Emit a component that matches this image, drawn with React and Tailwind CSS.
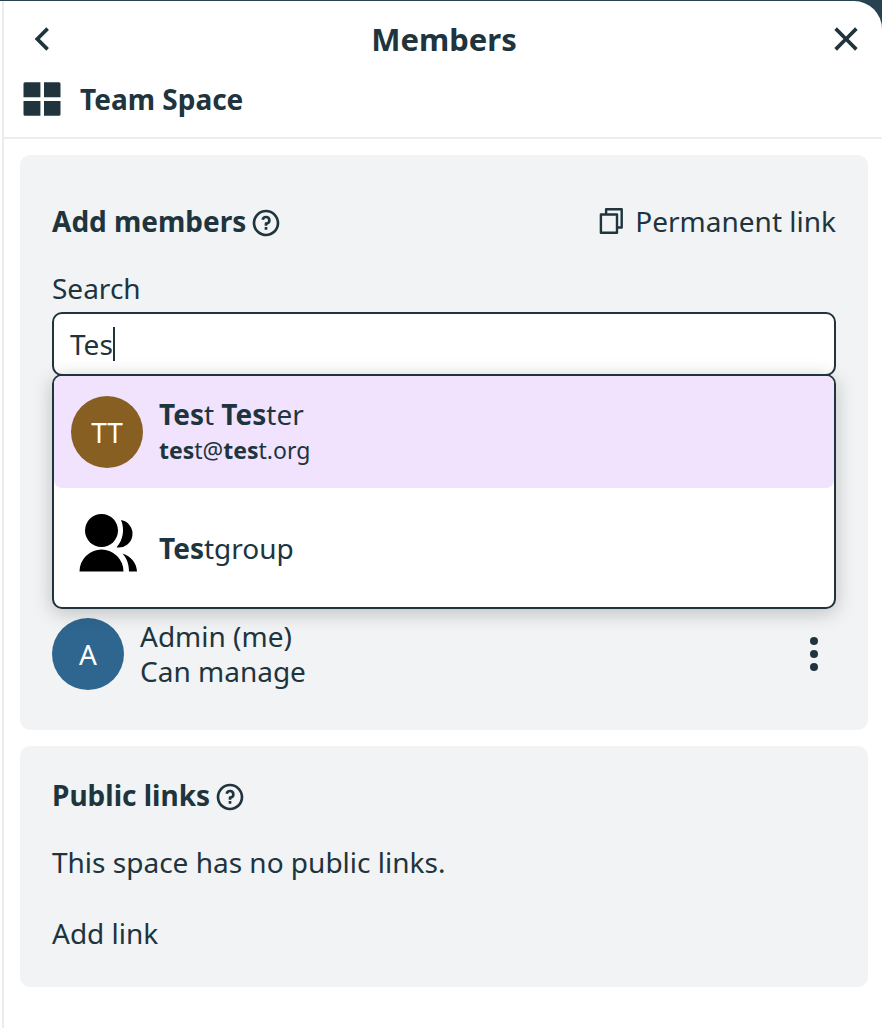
import { useState } from "react";

function HelpIcon() {
  return (
    <svg viewBox="0 0 24 24" className="size-8" fill="currentColor" aria-hidden="true">
      <path d="M12 22C6.477 22 2 17.523 2 12S6.477 2 12 2s10 4.477 10 10-4.477 10-10 10zm0-2a8 8 0 1 0 0-16 8 8 0 0 0 0 16zm-1-5h2v2h-2v-2zm2-1.645V14h-2v-1.500a1 1 0 0 1 1-1 1.500 1.500 0 1 0-1.471-1.794l-1.962-.393A3.501 3.501 0 1 1 13 13.355z" />
    </svg>
  );
}

function BackIcon() {
  return (
    <svg viewBox="0 0 24 24" className="size-11" fill="currentColor" aria-hidden="true">
      <path d="M10.828 12l4.950 4.950-1.414 1.414L8 12l6.364-6.364 1.414 1.414z" />
    </svg>
  );
}

function CloseIcon() {
  return (
    <svg viewBox="0 0 24 24" className="size-11" fill="currentColor" aria-hidden="true">
      <path d="M12 10.586l4.950-4.950 1.414 1.414-4.950 4.950 4.950 4.950-1.414 1.414-4.950-4.950-4.950 4.950-1.414-1.414 4.950-4.950-4.950-4.950L7.050 5.636z" />
    </svg>
  );
}

function SpaceIcon() {
  return (
    <svg viewBox="0 0 44 44" className="size-11" fill="currentColor" aria-hidden="true">
      <path d="M5 5.300h15.400v14.900H3.500V6.800a1.500 1.500 0 0 1 1.500-1.500zM24 5.300h15a1.500 1.500 0 0 1 1.500 1.500v13.400H24zM3.500 23.900h16.900v14.900H5a1.500 1.500 0 0 1-1.500-1.500zM24 23.900h16.500v13.400a1.500 1.500 0 0 1-1.500 1.500H24z" />
    </svg>
  );
}

function CopyIcon() {
  return (
    <svg viewBox="0 0 24 26" className="h-[26px] w-6" fill="none" stroke="currentColor" strokeWidth="2.400" strokeLinejoin="round" aria-hidden="true">
      <path d="M7.100 6V1.300h15.600v18.200H18M1.900 6.500h16.100v18.200H1.900z" />
    </svg>
  );
}

function GroupIcon() {
  return (
    <svg viewBox="0 0 72 72" className="size-[72px] text-black" fill="currentColor" aria-hidden="true">
      <circle cx="30.500" cy="18.500" r="16.500" />
      <path d="M8.500 59.500a22 22 0 0 1 44 0zM50 8.100a13.700 13.700 0 0 1-4.500 27.200C52 28.500 54 17.500 50 8.100zM51.500 41.500C60 44.500 65.500 50.500 66 59.500h-8c0-7-2-13-6.500-18z" />
    </svg>
  );
}

function Section({ children, className }) {
  return <section className={`rounded-[10px] bg-[#f1f3f4] px-8 ${className}`}>{children}</section>;
}

function Heading({ title }) {
  return (
    <div className="flex items-center gap-1">
      <h2 className="text-[28px] leading-[35px] font-bold">{title}</h2>
      <button type="button" aria-label={`Help: ${title}`} className="mt-1"><HelpIcon /></button>
    </div>
  );
}

function Avatar({ initials, className }) {
  return <span className={`flex size-[72px] shrink-0 items-center justify-center rounded-full text-[28px] text-white ${className}`}>{initials}</span>;
}

export default function App() {
  const [query, setQuery] = useState("Tes");
  return (
    <div className="min-h-screen overflow-hidden bg-[#29424f] pt-px font-['Noto_Sans',sans-serif] text-[#20343e]">
      <main className="min-h-screen rounded-tr-[28px] bg-white pl-0.5">
        <div className="min-h-screen border-l-2 border-[#ececec]">
          <header className="border-b-2 border-[#ececec] py-4 pr-3.5 pl-4">
            <div className="flex items-center justify-between">
              <button type="button" aria-label="Back"><BackIcon /></button>
              <h1 className="text-[31px] leading-11 font-bold">Members</h1>
              <button type="button" aria-label="Close"><CloseIcon /></button>
            </div>
            <div className="mt-4 flex items-center gap-4">
              <SpaceIcon />
              <span className="text-[28px] leading-[35px] font-bold">Team Space</span>
            </div>
          </header>

          <div className="flex flex-col gap-4 py-4 pr-3.5 pl-4">
            <Section className="pt-12 pb-10">
              <div className="flex items-center justify-between">
                <Heading title="Add members" />
                <button type="button" className="flex items-center gap-3 text-[28px] leading-[35px]">
                  <CopyIcon />
                  Permanent link
                </button>
              </div>
              <label htmlFor="member-search" className="mt-8 block text-[28px] leading-[35px]">Search</label>
              <div className="relative mt-1.5">
                <input
                  id="member-search"
                  type="text"
                  autoComplete="off"
                  value={query}
                  onChange={(e) => setQuery(e.target.value)}
                  className="block h-16 w-full rounded-[10px] border-2 border-[#20343e] bg-white px-4 text-[28px] caret-transparent outline-none"
                />
                <div className="pointer-events-none absolute inset-y-0 left-[18px] flex items-center text-[28px]" aria-hidden="true">
                  <span className="invisible whitespace-pre">{query}</span>
                  <span className="h-[34px] w-0.5 bg-[#20343e]" />
                </div>
                <ul role="listbox" aria-label="Search results" className="absolute inset-x-0 top-[62px] z-10 rounded-[10px] border-2 border-[#20343e] bg-white shadow-[0_4px_20px_rgba(0,0,0,0.22)]">
                  <li role="option" aria-selected="true" className="flex h-28 items-center gap-4 rounded-lg bg-[#f1e3fd] px-[17px]">
                    <Avatar initials="TT" className="bg-[#875f23]" />
                    <div>
                      <div className="text-[28px] leading-9"><b>Tes</b>t <b>Tes</b>ter</div>
                      <div className="text-[23px] leading-9"><b>tes</b>t@<b>tes</b>t.org</div>
                    </div>
                  </li>
                  <li role="option" aria-selected="false" className="flex h-[119px] items-center gap-4 px-[17px]">
                    <GroupIcon />
                    <div className="text-[28px] leading-9"><b>Tes</b>tgroup</div>
                  </li>
                </ul>
              </div>
              <div className="mt-[242px] flex items-center gap-4">
                <Avatar initials="A" className="bg-[#2f668f]" />
                <div className="flex-1 text-[28px] leading-[35px]">
                  <div>Admin (me)</div>
                  <div>Can manage</div>
                </div>
                <button type="button" aria-label="Member options">
                  <svg viewBox="0 0 44 44" className="size-11" fill="currentColor" aria-hidden="true">
                    <circle cx="22" cy="9" r="4" />
                    <circle cx="22" cy="22" r="4" />
                    <circle cx="22" cy="35" r="4" />
                  </svg>
                </button>
              </div>
            </Section>

            <Section className="pt-[31px] pb-9">
              <Heading title="Public links" />
              <p className="mt-8 text-[28px] leading-[35px]">This space has no public links.</p>
              <button type="button" className="mt-9 block text-[28px] leading-[35px]">Add link</button>
            </Section>
          </div>
        </div>
      </main>
    </div>
  );
}
